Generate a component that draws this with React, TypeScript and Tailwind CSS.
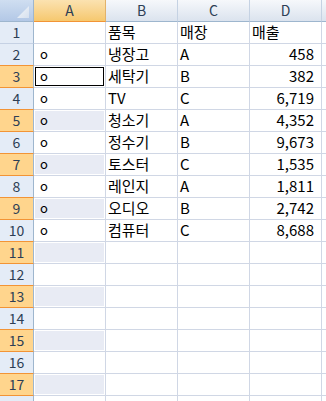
import React from 'react'

const rows: [string, string, string][] = [
  ['냉장고', 'A', '458'],
  ['세탁기', 'B', '382'],
  ['TV', 'C', '6,719'],
  ['청소기', 'A', '4,352'],
  ['정수기', 'B', '9,673'],
  ['토스터', 'C', '1,535'],
  ['레인지', 'A', '1,811'],
  ['오디오', 'B', '2,742'],
  ['컴퓨터', 'C', '8,688'],
]

const font = { fontFamily: '"Noto Sans CJK KR", "Liberation Sans", sans-serif' }

function RowHeader({ n, selected, orangeBottom }: { n: number; selected: boolean; orangeBottom: boolean }) {
  return (
    <div
      className={
        'h-[22px] flex items-center justify-center border-r border-r-[#9eb6ce] border-b text-[14px] text-[#2d3e55] ' +
        (selected ? 'bg-[#ffd58d] ' : 'bg-[#e4ecf7] ') +
        (orangeBottom ? 'border-b-[#f29436]' : 'border-b-[#c5d1e4]')
      }
    >
      {n < 18 ? n : null}
    </div>
  )
}

function Cell({ children, right, fill, active }: { children?: React.ReactNode; right?: boolean; fill?: boolean; active?: boolean }) {
  return (
    <div className="h-[22px] border-r border-b border-[#d0d7e5] relative">
      {fill && <div className="absolute inset-px bg-[#e8ebf4]" />}
      {active && <div className="absolute inset-px border border-black" />}
      <div
        className={
          'relative h-full flex items-end pb-[2px] text-[15px] leading-[18px] text-black whitespace-nowrap ' +
          (right ? 'justify-end pr-[7px]' : 'pl-[2px]')
        }
      >
        {children}
      </div>
    </div>
  )
}

export default function App() {
  const total = 18
  return (
    <div className="w-[326px] h-[401px] overflow-hidden bg-white" style={font}>
      <div className="grid grid-cols-[34px_72px_72px_72px_72px_1fr]">
        {/* header row */}
        <div className="h-[22px] border-r border-b border-[#9eb6ce] bg-gradient-to-b from-[#cfdef1] to-[#b3c8e6] relative">
          <svg className="absolute left-0 top-0" width="33" height="21" viewBox="0 0 33 21">
            <defs>
              <linearGradient id="tri" x1="0" y1="0" x2="1" y2="1">
                <stop offset="0" stopColor="#f4f7fb" />
                <stop offset="1" stopColor="#d6e0ee" />
              </linearGradient>
            </defs>
            <polygon points="17,18 29,18 29,6" fill="url(#tri)" />
          </svg>
        </div>
        <div className="h-[22px] flex items-center justify-center border-r border-r-[#e2b26a] border-b border-b-[#f29436] bg-gradient-to-b from-[#fbe2b0] to-[#f6c86e] text-[14px] text-[#2d3e55]">
          A
        </div>
        {['B', 'C', 'D'].map((c) => (
          <div
            key={c}
            className="h-[22px] flex items-center justify-center border-r border-r-[#c5d2e3] border-b border-b-[#9eb6ce] bg-gradient-to-b from-[#f6f8fb] to-[#dbe3ee] text-[14px] text-[#2d3e55]"
          >
            {c}
          </div>
        ))}
        <div className="h-[22px] border-b border-b-[#9eb6ce] bg-gradient-to-b from-[#f6f8fb] to-[#dbe3ee]" />

        {Array.from({ length: total }, (_, i) => {
          const n = i + 1
          const selected = n >= 3 && n % 2 === 1
          const nextSelected = n + 1 >= 3 && (n + 1) % 2 === 1
          const data = n === 1 ? ['품목', '매장', '매출'] : n <= 10 ? rows[n - 2] : null
          return (
            <React.Fragment key={n}>
              <RowHeader n={n} selected={selected} orangeBottom={selected || nextSelected} />
              <Cell fill={selected && n !== 3} active={n === 3}>
                {n >= 2 && n <= 10 ? <span className="pl-[4px] pb-[2px] text-[13px] leading-[15px]">o</span> : null}
              </Cell>
              <Cell>{data ? data[0] : null}</Cell>
              <Cell>{data ? data[1] : null}</Cell>
              <Cell right={n !== 1}>{data ? data[2] : null}</Cell>
              <div className="h-[22px] border-b border-[#d0d7e5]" />
            </React.Fragment>
          )
        })}
      </div>
    </div>
  )
}
